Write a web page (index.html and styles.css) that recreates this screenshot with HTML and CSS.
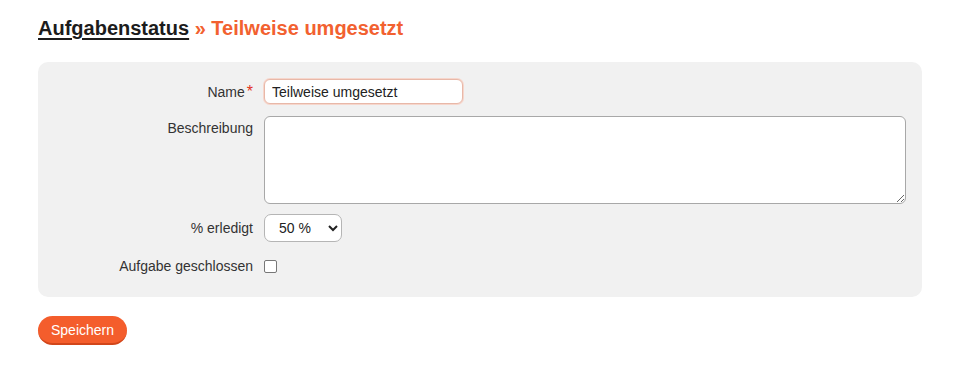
FILE: index.html
```html
<!DOCTYPE html>
<html lang="de">
<head>
<meta charset="utf-8">
<link rel="stylesheet" href="styles.css">
</head>
<body>
<h2 class="title"><a href="#" class="crumb">Aufgabenstatus</a> <span class="current">» Teilweise umgesetzt</span></h2>
<form class="form">
  <div class="box">
    <div class="row row-name">
      <label class="lbl">Name<span class="req">*</span></label>
      <input class="inp-name" type="text" value="Teilweise umgesetzt">
    </div>
    <div class="row row-desc">
      <label class="lbl lbl-top">Beschreibung</label>
      <textarea class="inp-desc"></textarea>
    </div>
    <div class="row row-sel">
      <label class="lbl">% erledigt</label>
      <select class="inp-sel"><option>50 %</option></select>
    </div>
    <div class="row row-chk">
      <label class="lbl">Aufgabe geschlossen</label>
      <span class="chk"></span>
    </div>
  </div>
  <button type="button" class="btn">Speichern</button>
</form>
</body>
</html>
```
FILE: styles.css
```css
* { box-sizing: border-box; }
body {
  margin: 0;
  padding: 14px 41px 0 38px;
  font-family: "Liberation Sans", Arial, sans-serif;
  font-size: 14px;
  color: #333;
  background: #fff;
}
.title {
  margin: 0;
  font-size: 20px;
  font-weight: bold;
  line-height: 28px;
  color: #f26130;
}
.crumb {
  color: #1c1c1c;
  text-decoration: underline;
  text-decoration-thickness: 2px;
  text-underline-offset: 3px;
}
.current { color: #f26130; }
.form { margin-top: 20px; }
.box {
  background: #f1f1f1;
  border-radius: 10px;
  padding: 17px 16px 23px 0;
  display: flex;
  flex-direction: column;
}
.row {
  display: grid;
  grid-template-columns: 215px 1fr;
  column-gap: 11px;
  align-items: center;
}
.lbl {
  text-align: right;
  color: #333;
  font-size: 14px;
}
.lbl-top { align-self: start; padding-top: 4px; }
.req { color: #e2311c; font-size: 16px; margin-left: 2px; }
.inp-name {
  width: 199px;
  height: 25px;
  border: 1px solid #e8b8a8;
  box-shadow: 0 0 0 1px #f6d6cc;
  border-radius: 6px;
  background: #fff;
  font-family: "Liberation Sans", Arial, sans-serif;
  font-size: 14px;
  color: #222;
  padding: 2px 7px;
  outline: none;
}
.row-desc { margin-top: 12px; }
.inp-desc {
  width: 100%;
  height: 88px;
  border: 1px solid #a8a8a8;
  border-radius: 6px;
  background: #fff;
  display: block;
}
.row-sel { margin-top: 10px; }
.inp-sel {
  width: 78px;
  height: 28px;
  border: 1px solid #b5b5b5;
  border-radius: 7px;
  background: #fff;
  font-family: "Liberation Sans", Arial, sans-serif;
  font-size: 14px;
  color: #222;
  padding: 0 6px 0 10px;
}
.row-chk { margin-top: 16px; }
.chk {
  display: block;
  width: 13px;
  height: 13px;
  border: 1px solid #777;
  border-radius: 2px;
  background: #fff;
}
.btn {
  margin-top: 19px;
  height: 29px;
  padding: 0 13px;
  border: none;
  border-bottom: 2px solid #d2461a;
  border-radius: 15px;
  background: #f45d2c;
  color: #fff;
  font-family: "Liberation Sans", Arial, sans-serif;
  font-size: 14px;
}
```
